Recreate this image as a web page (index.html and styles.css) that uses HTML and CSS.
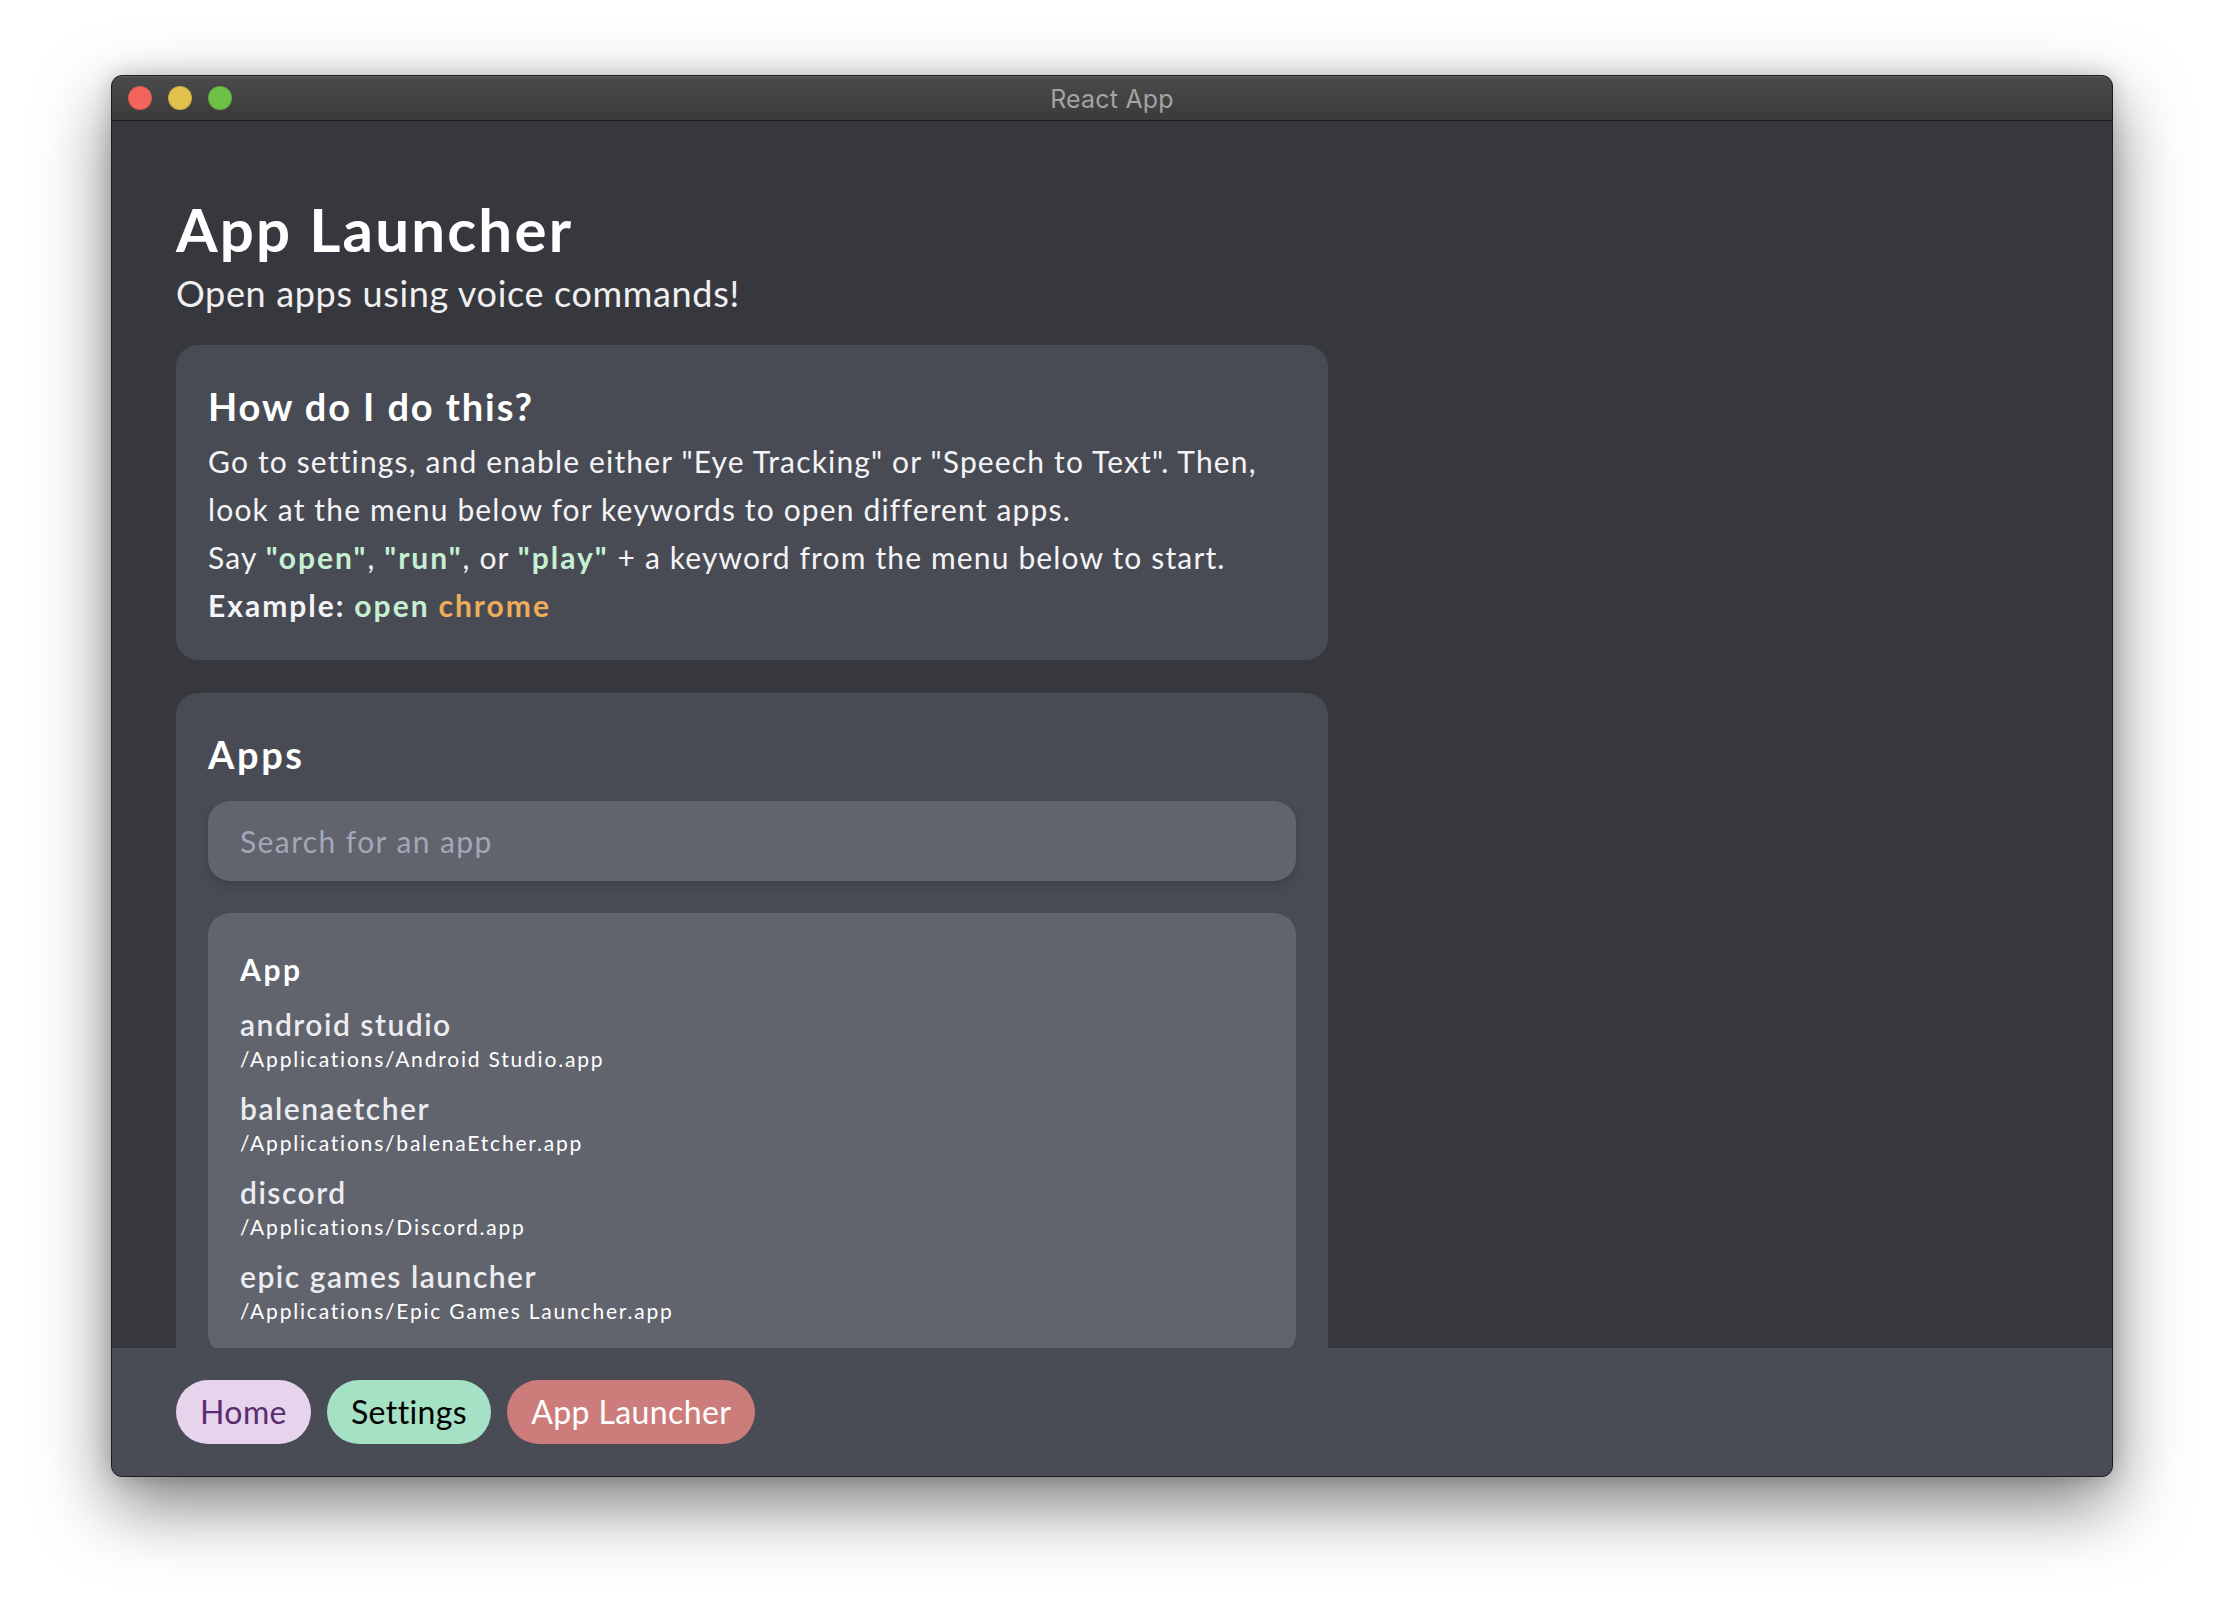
FILE: index.html
```html
<!DOCTYPE html>
<html lang="en">
<head>
<meta charset="utf-8">
<title>React App</title>
<link rel="stylesheet" href="styles.css">
</head>
<body>
<div class="window">
  <div class="titlebar">
    <div class="lights">
      <span class="light red"></span>
      <span class="light yellow"></span>
      <span class="light green"></span>
    </div>
    <div class="title">React App</div>
    <div class="spacer"></div>
  </div>
  <div class="content">
    <main class="main">
      <h1 class="page-title">App Launcher</h1>
      <p class="subtitle">Open apps using voice commands!</p>
      <section class="card">
        <h2 class="card-title">How do I do this?</h2>
        <p class="card-text">Go to settings, and enable either "Eye Tracking" or "Speech to Text". Then, look at the menu below for keywords to open different apps.</p>
        <p class="card-text">Say <b class="kw">"open"</b>, <b class="kw">"run"</b>, or <b class="kw">"play"</b> + a keyword from the menu below to start.</p>
        <p class="card-text"><b>Example:</b> <b class="kw">open</b> <b class="app-kw">chrome</b></p>
      </section>
      <section class="card apps-card">
        <h2 class="card-title">Apps</h2>
        <input class="search" type="text" placeholder="Search for an app">
        <div class="app-list">
          <div class="list-head">App</div>
          <div class="app-item"><div class="app-name">android studio</div><div class="app-path">/Applications/Android Studio.app</div></div>
          <div class="app-item"><div class="app-name">balenaetcher</div><div class="app-path">/Applications/balenaEtcher.app</div></div>
          <div class="app-item"><div class="app-name">discord</div><div class="app-path">/Applications/Discord.app</div></div>
          <div class="app-item"><div class="app-name">epic games launcher</div><div class="app-path">/Applications/Epic Games Launcher.app</div></div>
        </div>
      </section>
    </main>
    <nav class="footer">
      <button class="nav-btn home">Home</button>
      <button class="nav-btn settings">Settings</button>
      <button class="nav-btn launcher">App Launcher</button>
    </nav>
  </div>
</div>
</body>
</html>
```
FILE: styles.css
```css
* { box-sizing: border-box; }
html, body { margin: 0; padding: 0; }
body {
  width: 2224px;
  height: 1624px;
  background: #ffffff;
  padding: 75px 0 0 111px;
  overflow: hidden;
  font-family: Lato, "Noto Sans", sans-serif;
}
.window {
  width: 2002px;
  height: 1402px;
  border-radius: 11px;
  border: 1px solid #1c1c1e;
  box-shadow: 0 28px 70px rgba(0,0,0,0.5), 0 0 22px rgba(0,0,0,0.18);
  overflow: hidden;
  display: flex;
  flex-direction: column;
  background: #37383e;
}
.titlebar {
  height: 45px;
  flex: none;
  display: grid;
  grid-template-columns: 1fr auto 1fr;
  align-items: center;
  background: linear-gradient(#4a4a4a, #3b3b3b);
  border-bottom: 1px solid #1e1e1e;
  box-shadow: inset 0 1px 0 rgba(255,255,255,0.12);
}
.lights { display: flex; gap: 16px; padding-left: 16px; }
.light { width: 24px; height: 24px; border-radius: 50%; display: block; }
.red { background: #f1655c; box-shadow: inset 0 0 0 1px rgba(0,0,0,0.12); }
.yellow { background: #e2c14c; box-shadow: inset 0 0 0 1px rgba(0,0,0,0.12); }
.green { background: #6ec046; box-shadow: inset 0 0 0 1px rgba(0,0,0,0.12); }
.title {
  font-family: Inter, "Noto Sans", sans-serif;
  font-size: 25px;
  color: #a3a3a3;
  letter-spacing: 0.2px;
  padding-top: 2px;
}
.content {
  flex: 1;
  display: flex;
  flex-direction: column;
  min-height: 0;
}
.main {
  flex: 1;
  min-height: 0;
  overflow: hidden;
  padding: 72px 64px 0 64px;
  color: #ffffff;
}
.page-title {
  margin: 0;
  font-size: 60px;
  line-height: 72px;
  font-weight: 700;
  letter-spacing: 2.2px;
  color: #ffffff;
}
.subtitle {
  margin: 7px 0 30px;
  font-size: 36px;
  line-height: 43px;
  letter-spacing: 0.65px;
  color: #f0f0f2;
}
.card {
  width: 1152px;
  background: #494b54;
  border-radius: 22px;
  padding: 38px 32px 31px;
  margin-bottom: 33px;
}
.card-title {
  margin: 0 0 8px;
  font-size: 38px;
  line-height: 46px;
  font-weight: 700;
  letter-spacing: 1.9px;
  color: #ffffff;
}
.card-text {
  margin: 0;
  font-size: 30px;
  line-height: 48px;
  letter-spacing: 1.15px;
  color: #f4f4f6;
}
.card-text b { font-weight: 700; letter-spacing: 2px; }
.kw { color: #c6f0d3; }
.app-kw { color: #eead5a; }
.apps-card { padding-bottom: 32px; }
.apps-card .card-title { margin-bottom: 24px; letter-spacing: 2.6px; }
.search {
  display: block;
  width: 100%;
  height: 80px;
  border: none;
  outline: none;
  border-radius: 22px;
  background: #61646d;
  padding: 0 32px;
  font-family: Lato, "Noto Sans", sans-serif;
  font-size: 30px;
  letter-spacing: 1.4px;
  color: #ffffff;
  box-shadow: 0 6px 10px rgba(0,0,0,0.12);
}
.search::placeholder { color: #a0a8b8; }
.app-list {
  margin-top: 32px;
  background: #61646d;
  border-radius: 22px;
  padding: 38px 32px 32px;
  display: flex;
  flex-direction: column;
  gap: 19px;
}
.list-head {
  font-size: 30px;
  line-height: 36px;
  font-weight: 700;
  letter-spacing: 2.6px;
  color: #ffffff;
}
.app-name {
  font-size: 30px;
  line-height: 36px;
  font-weight: 600;
  letter-spacing: 1.5px;
  color: #ececf0;
}
.app-path {
  margin-top: 4px;
  font-size: 21px;
  line-height: 25px;
  letter-spacing: 1.8px;
  color: #ffffff;
}
.footer {
  flex: none;
  height: 128px;
  background: #494b55;
  padding: 32px 64px;
  display: flex;
  gap: 16px;
}
.nav-btn {
  height: 64px;
  border: none;
  border-radius: 32px;
  padding: 0 24px;
  font-family: Lato, "Noto Sans", sans-serif;
  font-size: 32px;
  line-height: 64px;
  letter-spacing: 0.4px;
}
.home { background: #e6d3ec; color: #5b2c72; }
.settings { background: #a5e1c4; color: #000000; }
.launcher { background: #cc7d7b; color: #ffffff; }
```
